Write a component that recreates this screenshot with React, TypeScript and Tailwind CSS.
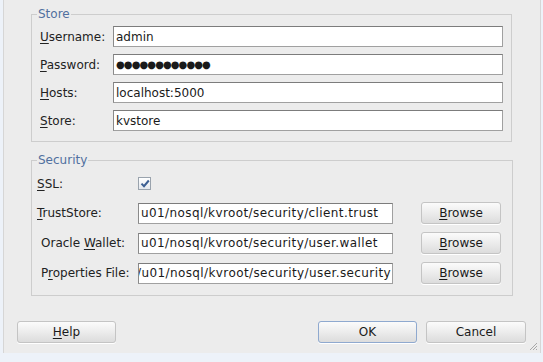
import React from 'react';

const font = { fontFamily: '"DejaVu Sans", Verdana, sans-serif' };

function Mn({ label, k }: { label: string; k: number }) {
  return (
    <span>
      {label.slice(0, k)}
      <u className="underline-offset-2">{label[k]}</u>
      {label.slice(k + 1)}
    </span>
  );
}

function Field({ children, end }: { children: React.ReactNode; end?: boolean }) {
  return (
    <div
      className={`h-[21px] bg-white border border-[#a0a0a0] border-t-[#7c7c7c] border-l-[#8a8a8a] flex items-center ${
        end ? 'justify-end pr-[1px]' : 'pl-[2px]'
      } overflow-hidden whitespace-nowrap text-[12px] text-[#1a1a1a]`}
    >
      {children}
    </div>
  );
}

function Button({ children, w, primary }: { children: React.ReactNode; w: string; primary?: boolean }) {
  return (
    <div
      className={`${w} h-[22px] rounded-[3px] border ${
        primary ? 'border-[#8fa9cf]' : 'border-[#c4c4c4]'
      } bg-gradient-to-b from-[#fbfbfb] via-[#ececec] to-[#dcdcdc] flex items-center justify-center text-[12px] text-[#1a1a1a] shadow-[0_1px_0_#ffffff]`}
    >
      {children}
    </div>
  );
}

export default function App() {
  const store = [
    { label: 'Username:', k: 0, value: 'admin' },
    { label: 'Password:', k: 0, value: '●●●●●●●●●●●●' },
    { label: 'Hosts:', k: 0, value: 'localhost:5000' },
    { label: 'Store:', k: 0, value: 'kvstore' },
  ];
  const sec = [
    { label: 'TrustStore:', k: 0, value: 'u01/nosql/kvroot/security/client.trust', wide: true, end: false },
    { label: 'Oracle Wallet:', k: 7, value: 'u01/nosql/kvroot/security/user.wallet', wide: false, end: false },
    { label: 'Properties File:', k: 1, value: '/u01/nosql/kvroot/security/user.security', wide: false, end: true },
  ];

  return (
    <div className="w-[543px] h-[362px] bg-[#edf2f9] overflow-hidden" style={font}>
      <div className="h-[353px] bg-[#ececec] ml-[3px] w-[538px] border-l border-r border-[#d6d6d6] relative flex flex-col">
        {/* STORE */}
        <fieldset className="ml-[27px] mt-[7px] w-[481px] border border-[#cdcdcd] px-0 pt-[5px] pb-[10px]">
          <legend className="ml-[5px] px-[1px] text-[12px] leading-[14px] text-[#51709f]">Store</legend>
          <div className="flex flex-col gap-[7px] pl-[8px] pr-[8px]">
            {store.map((r) => (
              <div key={r.label} className="flex items-center">
                <div className="w-[73px] text-[12px] text-[#222]">
                  <Mn label={r.label} k={r.k} />
                </div>
                <div className="flex-1">
                  <Field>
                    {r.label === 'Password:' ? (
                      <span className="text-[10px] tracking-[-0.9px]">{r.value}</span>
                    ) : (
                      r.value
                    )}
                  </Field>
                </div>
              </div>
            ))}
          </div>
        </fieldset>

        {/* SECURITY */}
        <fieldset className="ml-[27px] mt-[11px] w-[482px] border border-[#cdcdcd] px-0 pt-[6px] pb-[11px]">
          <legend className="ml-[5px] px-[1px] text-[12px] leading-[14px] text-[#51709f]">Security</legend>
          <div className="flex flex-col gap-[8px]">
            <div className="flex items-center h-[21px] pl-[5px]">
              <div className="w-[101px] text-[12px] text-[#222]">
                <Mn label="SSL:" k={0} />
              </div>
              <div className="w-[13px] h-[13px] border border-[#9aa3ad] bg-gradient-to-b from-white to-[#e4e8ee] flex items-center justify-center">
                <svg width="10" height="9" viewBox="0 0 10 9">
                  <path d="M1.5 4.6 L4 7.2 L8.8 1.5" fill="none" stroke="#3c5f93" strokeWidth="2" />
                </svg>
              </div>
            </div>
            {sec.map((r) => (
              <div key={r.label} className={`flex items-center ${r.wide ? 'pl-[5px]' : 'pl-[9px]'}`}>
                <div className={`${r.wide ? 'w-[101px]' : 'w-[97px]'} text-[12px] text-[#222] whitespace-nowrap`}>
                  <Mn label={r.label} k={r.k} />
                </div>
                <div className="w-[255px]">
                  <Field end={r.end}>
                    <span className="tracking-[0.4px]">{r.value}</span>
                  </Field>
                </div>
                <div className="ml-[28px]">
                  <Button w="w-[80px]">
                    <Mn label="Browse" k={0} />
                  </Button>
                </div>
              </div>
            ))}
          </div>
        </fieldset>

        {/* BUTTONS */}
        <div className="flex items-center mt-[25px] pl-[13px]">
          <Button w="w-[99px]">
            <Mn label="Help" k={0} />
          </Button>
          <div className="flex-1" />
          <div className="flex gap-[9px] pr-[14px]">
            <Button w="w-[99px]" primary>
              OK
            </Button>
            <Button w="w-[100px]">Cancel</Button>
          </div>
        </div>

        {/* resize grip */}
        <svg className="absolute right-[2px] bottom-[2px]" width="10" height="10" viewBox="0 0 10 10">
          <path d="M9 2 L2 9 M9 5 L5 9 M9 8 L8 9" stroke="#a8a8a8" strokeWidth="1" />
        </svg>
      </div>
    </div>
  );
}
